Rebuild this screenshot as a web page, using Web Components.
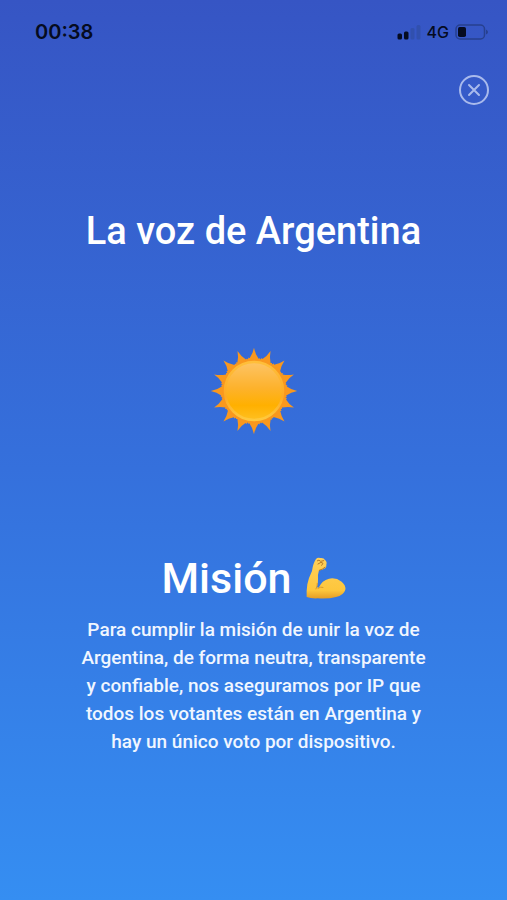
<!DOCTYPE html>
<html lang="es">
<head>
  <meta charset="utf-8">
  <meta name="viewport" content="width=device-width, initial-scale=1">
  <title>La voz de Argentina</title>
  <style>
    body {
      margin: 0;
      color: #fff;
      font-family: Roboto, sans-serif;
      font-weight: 500;
    }
  </style>
</head>
<body>
  <app-screen>
    <status-bar slot="status" time="00:38" network="4G"></status-bar>
    <close-button slot="close" label="Cerrar"></close-button>
    <page-title>La voz de Argentina</page-title>
    <sun-icon></sun-icon>
    <mission-section>
      <span slot="heading">Misión</span>
      <muscle-icon slot="icon"></muscle-icon>
      Para cumplir la misión de unir la voz de Argentina, de forma neutra, transparente y confiable, nos aseguramos por IP que todos los votantes están en Argentina y hay un único voto por dispositivo.
    </mission-section>
  </app-screen>

  <script>
    // shared base, every component renders its own template once
    class BaseComponent extends HTMLElement {
      constructor() {
        super();
        this.shadow = this.attachShadow({ mode: 'open' });
        this.shadow.innerHTML = this.template();
      }
    }

    class AppScreen extends BaseComponent {
      template() {
        return `
          <style>
            :host {
              display: flex;
              flex-direction: column;
              box-sizing: border-box;
              min-height: 100vh;
              background: linear-gradient(#3655c4, #3570dc 52%, #358ef2);
            }

            .toolbar {
              display: flex;
              justify-content: flex-end;
              padding: 10px 17px 0;
            }

            main {
              display: flex;
              flex-direction: column;
              align-items: center;
              gap: 92px;
              padding: 101px 24px 40px;
            }
          </style>
          <slot name="status"></slot>
          <div class="toolbar"><slot name="close"></slot></div>
          <main><slot></slot></main>
        `;
      }
    }

    class StatusBar extends BaseComponent {
      template() {
        return `
          <style>
            :host {
              display: flex;
              align-items: center;
              justify-content: space-between;
              height: 64px;
              padding: 0 18px 0 35px;
              color: #050b20;
              font-family: Inter, sans-serif;
            }

            .time {
              font-size: 20px;
              font-weight: 600;
            }

            .indicators {
              display: flex;
              align-items: center;
              gap: 6px;
              font-size: 16px;
              font-weight: 500;
            }

            svg {
              display: block;
            }
          </style>
          <span class="time"></span>
          <div class="indicators">
            <svg width="24" height="16" viewBox="0 0 24 16" aria-hidden="true">
              <rect x="0.5" y="9.5" width="4.5" height="6" rx="1.5" fill="#050b20"/>
              <rect x="7" y="7.5" width="4.5" height="8" rx="1.5" fill="#050b20"/>
              <rect x="13.5" y="4" width="4" height="11.5" rx="1.5" fill="#3150ae"/>
              <rect x="19.5" y="1" width="4" height="14.5" rx="1.5" fill="#3150ae"/>
            </svg>
            <span class="network"></span>
            <svg width="34" height="16" viewBox="0 0 34 16" aria-hidden="true">
              <rect x="1" y="1" width="28.5" height="14" rx="4" fill="none" stroke="#27408f" stroke-width="1.5"/>
              <rect x="3" y="3" width="8" height="10" rx="1.8" fill="#050b20"/>
              <path d="M31 5.500q2 1 2 2.500t-2 2.500z" fill="#27408f"/>
            </svg>
          </div>
        `;
      }

      connectedCallback() {
        this.shadow.querySelector('.time').textContent = this.getAttribute('time');
        this.shadow.querySelector('.network').textContent = this.getAttribute('network');
      }
    }

    class CloseButton extends BaseComponent {
      template() {
        return `
          <style>
            :host {
              display: block;
            }

            button {
              display: block;
              padding: 0;
              border: 0;
              background: none;
              color: #a9baec;
              cursor: pointer;
            }

            svg {
              display: block;
            }
          </style>
          <button type="button">
            <svg width="32" height="32" viewBox="0 0 32 32" fill="none" stroke="currentColor" stroke-width="2" stroke-linecap="round" aria-hidden="true">
              <circle cx="16" cy="16" r="14"/>
              <path d="M11 11l10 10M21 11L11 21"/>
            </svg>
          </button>
        `;
      }

      connectedCallback() {
        this.shadow.querySelector('button').setAttribute('aria-label', this.getAttribute('label'));
      }
    }

    class PageTitle extends BaseComponent {
      template() {
        return `
          <style>
            :host {
              display: block;
            }

            h1 {
              margin: 0;
              font-size: 38px;
              font-weight: 500;
              line-height: 48px;
              text-align: center;
            }
          </style>
          <h1><slot></slot></h1>
        `;
      }
    }

    class SunIcon extends BaseComponent {
      template() {
        // 16 equal rays around the disc
        const rays = Array.from({ length: 16 }, (_, i) =>
          `<path transform="rotate(${i * 22.5} 44 44)" d="M36.500 17L38.500 10.500L39.600 11.200Q42.800 7 44 0.800Q45.200 7 48.600 11.800L50 11.200L51.500 17Z"/>`
        ).join('');

        return `
          <style>
            :host {
              display: block;
            }

            svg {
              display: block;
            }
          </style>
          <svg width="88" height="88" viewBox="0 0 88 88" role="img" aria-label="Sol">
            <defs>
              <linearGradient id="disc" x1="0" y1="0" x2="0" y2="1">
                <stop offset="0" stop-color="#fdc466"/>
                <stop offset="0.45" stop-color="#fdb22c"/>
                <stop offset="0.75" stop-color="#ffb000"/>
                <stop offset="1" stop-color="#ffc021"/>
              </linearGradient>
              <linearGradient id="rim" x1="0" y1="0" x2="0" y2="1">
                <stop offset="0" stop-color="#ffbf3a"/>
                <stop offset="0.6" stop-color="#fdaa24"/>
                <stop offset="1" stop-color="#ffca3e"/>
              </linearGradient>
            </defs>
            <g fill="#f9981e">${rays}</g>
            <circle cx="44" cy="44" r="32" fill="#f9981e"/>
            <circle cx="44" cy="44" r="29" fill="url(#disc)" stroke="url(#rim)" stroke-width="2.5"/>
          </svg>
        `;
      }
    }

    class MuscleIcon extends BaseComponent {
      template() {
        return `
          <style>
            :host {
              display: block;
            }

            svg {
              display: block;
            }
          </style>
          <svg width="40" height="42" viewBox="50 36 120 126" role="img" aria-label="Bíceps">
            <defs>
              <linearGradient id="skin" x1="0" y1="0" x2="0" y2="1">
                <stop offset="0" stop-color="#ffd05a"/>
                <stop offset="0.8" stop-color="#fdc63c"/>
                <stop offset="1" stop-color="#e59d25"/>
              </linearGradient>
            </defs>
            <path fill="url(#skin)" d="M80 42Q85 36 93 39Q104 38 107 45Q114 50 111 59Q112 68 104 71Q97 76 89 76Q85 88 86 103Q87 115 82 126L88 128Q98 106 119 101Q140 97 157 110Q170 121 168 134Q163 151 140 156Q118 162 85 160Q65 161 52 156Q51 138 54 118Q58 98 68 78Q71 55 80 42Z"/>
            <path fill="none" stroke="#b87925" stroke-width="3" stroke-linecap="round" stroke-linejoin="round" d="M84 47Q89 43 94 49L103 47M86 57L95 52L101 55L97 61M90 76Q100 73 107 67"/>
            <path fill="none" stroke="#d99a2d" stroke-width="3" stroke-linecap="round" d="M84 115Q85 123 80 132M86 130Q94 124 101 127"/>
          </svg>
        `;
      }
    }

    class MissionSection extends BaseComponent {
      template() {
        return `
          <style>
            :host {
              display: block;
              max-width: 348px;
              margin-top: 23px;
              text-align: center;
            }

            header {
              display: flex;
              align-items: center;
              justify-content: center;
              gap: 14px;
            }

            h2 {
              margin: 0;
              font-size: 43px;
              font-weight: 500;
              line-height: 56px;
            }

            p {
              margin: 10px 0 0;
              color: #f0f6ff;
              font-size: 19px;
              line-height: 28px;
            }
          </style>
          <header>
            <h2><slot name="heading"></slot></h2>
            <slot name="icon"></slot>
          </header>
          <p><slot></slot></p>
        `;
      }
    }

    // register components
    customElements.define('app-screen', AppScreen);
    customElements.define('status-bar', StatusBar);
    customElements.define('close-button', CloseButton);
    customElements.define('page-title', PageTitle);
    customElements.define('sun-icon', SunIcon);
    customElements.define('muscle-icon', MuscleIcon);
    customElements.define('mission-section', MissionSection);
  </script>
</body>
</html>
